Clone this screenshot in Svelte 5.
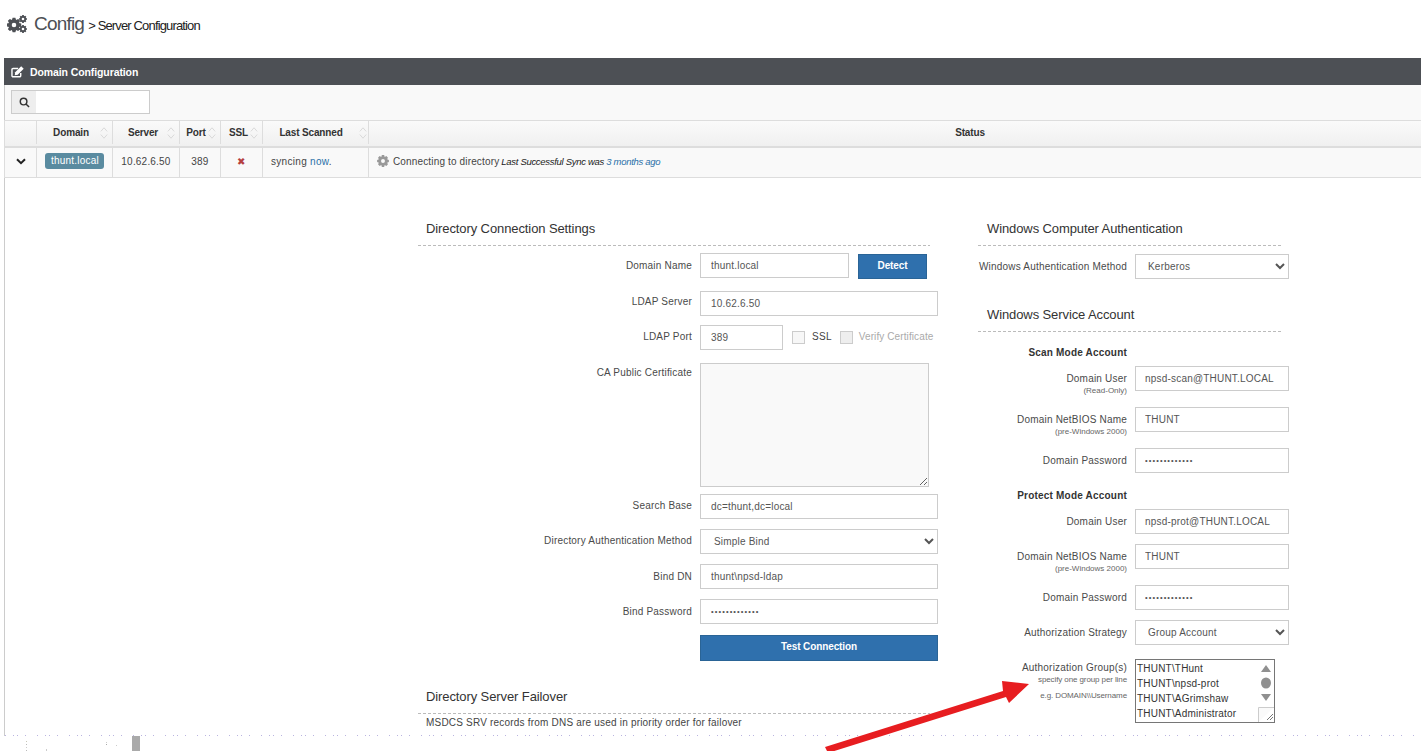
<script>
    let groups = "THUNT\\THunt\nTHUNT\\npsd-prot\nTHUNT\\AGrimshaw\nTHUNT\\Administrator"
    const sorted = [
        { label: "Domain", cls: "c-domain" },
        { label: "Server", cls: "c-server" },
        { label: "Port", cls: "c-port" },
        { label: "SSL", cls: "c-ssl" },
        { label: "Last Scanned", cls: "c-scan" }
    ]

    // teeth of a gear as one path, r1 outer and r2 root
    function gearPath(cx, cy, r1, r2, teeth = 8) {
        let d = ""
        const step = (Math.PI * 2) / teeth
        for (let i = 0; i < teeth; i++) {
            const a = i * step
            const pts = [
                [r2, a - step * 0.5],
                [r1, a - step * 0.24],
                [r1, a + step * 0.24],
                [r2, a + step * 0.5]
            ]
            for (const [r, t] of pts) {
                d += `${i === 0 && r === r2 && t < a ? "M" : "L"}${(cx + r * Math.cos(t)).toFixed(2)} ${(cy + r * Math.sin(t)).toFixed(2)}`
            }
        }
        return d + "Z"
    }
</script>

{#snippet gear(cx, cy, r1, r2, hole)}
    <path fill-rule="evenodd" d="{gearPath(cx, cy, r1, r2)}M{cx - hole} {cy}a{hole} {hole} 0 1 0 {hole * 2} 0a{hole} {hole} 0 1 0 {-hole * 2} 0Z" />
{/snippet}

{#snippet field(label, value, sub, cls = "")}
    <div class="row {cls}">
        <div class="lbl">{label}{#if sub}<small>{sub}</small>{/if}</div>
        <input class="ctl" type="text" {value} />
    </div>
{/snippet}

{#snippet password(label, cls = "")}
    <div class="row {cls}">
        <div class="lbl">{label}</div>
        <input class="ctl secret" type="password" value="aaaaaaaaaaaaa" />
    </div>
{/snippet}

{#snippet choice(label, value, cls = "")}
    <div class="row {cls}">
        <div class="lbl">{label}</div>
        <select class="ctl"><option>{value}</option></select>
    </div>
{/snippet}

<div class="page">
    <header class="crumbs">
        <svg class="cogs" viewBox="0 0 20 18" width="20" height="18" fill="#4d5055">
            {@render gear(7, 10, 7.4, 5.4, 2.3)}
            {@render gear(16, 4, 4, 2.9, 1.3)}
            {@render gear(16, 14, 4, 2.9, 1.3)}
        </svg>
        <span class="config">Config</span>
        <span class="trail">&gt; Server Configuration</span>
    </header>

    <section class="panel">
        <div class="panel-head">
            <svg viewBox="0 0 14 13" width="13" height="12" fill="none" stroke="#fff" stroke-width="1.5">
                <path d="M10.500 7.500v3a1.200 1.200 0 0 1-1.200 1.200H2.200A1.200 1.200 0 0 1 1 10.500V3.900a1.200 1.200 0 0 1 1.200-1.200h5.500" />
                <path fill="#fff" stroke="none" d="M4.500 6.800L11 .3l2.700 2.700L7.200 9.500l-3.200.5z" />
            </svg>
            <span>Domain Configuration</span>
        </div>
        <div class="toolbar">
            <div class="search">
                <span class="addon">
                    <svg viewBox="0 0 12 12" width="11" height="11" fill="none" stroke="#333" stroke-width="1.6">
                        <circle cx="5" cy="5" r="3.600" />
                        <path d="M7.600 7.600l3.400 3.400" />
                    </svg>
                </span>
            </div>
        </div>

        <div class="thead">
            <div class="cell c-toggle"></div>
            {#each sorted as col}
                <div class="cell {col.cls}">
                    <span class="th-label">{col.label}</span>
                    <svg class="sort" viewBox="0 0 10 16" width="8" height="14" fill="none" stroke="#d2d2d2" stroke-width="1">
                        <path d="M1 6l4-4.500 4 4.500M1 10l4 4.500 4-4.500" />
                    </svg>
                </div>
            {/each}
            <div class="cell c-status th-status">Status</div>
        </div>
        <div class="tbody">
            <div class="cell c-toggle">
                <svg viewBox="0 0 10 7" width="10" height="7" fill="none" stroke="#222" stroke-width="2">
                    <path d="M1 1.200l4 4 4-4" />
                </svg>
            </div>
            <div class="cell c-domain"><span class="badge">thunt.local</span></div>
            <div class="cell c-server">10.62.6.50</div>
            <div class="cell c-port">389</div>
            <div class="cell c-ssl"><span class="cross">✖</span></div>
            <div class="cell c-scan scan-text"><span>syncing <a href="#now">now</a>.</span></div>
            <div class="cell c-status status-text">
                <svg viewBox="0 0 14 14" width="12" height="12" fill="#999">
                    {@render gear(7, 7, 7, 5.200, 2.300)}
                </svg>
                <span class="state">Connecting to directory</span>
                <em>Last Successful Sync was <a href="#ago">3 months ago</a></em>
            </div>
        </div>

        <div class="forms">
            <div class="col-left">
                <h3>Directory Connection Settings</h3>
                <div class="row first-left domain-row">
                    <div class="lbl">Domain Name</div>
                    <input class="ctl short" type="text" value="thunt.local" />
                    <button class="btn detect">Detect</button>
                </div>
                {@render field("LDAP Server", "10.62.6.50", "", "ldap-row")}
                <div class="row port-row">
                    <div class="lbl">LDAP Port</div>
                    <input class="ctl port" type="text" value="389" />
                    <span class="check"></span>
                    <span class="check-label">SSL</span>
                    <span class="check off"></span>
                    <span class="check-label muted">Verify Certificate</span>
                </div>
                <div class="row cert-row">
                    <div class="lbl">CA Public Certificate</div>
                    <textarea class="ctl cert"></textarea>
                </div>
                {@render field("Search Base", "dc=thunt,dc=local", "", "nudge")}
                {@render choice("Directory Authentication Method", "Simple Bind", "nudge")}
                {@render field("Bind DN", "thunt\\npsd-ldap")}
                {@render password("Bind Password", "bind-row")}
                <div class="row test-row">
                    <div class="lbl"></div>
                    <button class="btn test">Test Connection</button>
                </div>
                <h3 class="failover">Directory Server Failover</h3>
                <p class="note">MSDCS SRV records from DNS are used in priority order for failover</p>
            </div>

            <div class="col-right">
                <h3>Windows Computer Authentication</h3>
                {@render choice("Windows Authentication Method", "Kerberos", "first-right")}
                <h3 class="service">Windows Service Account</h3>
                <div class="group-title">Scan Mode Account</div>
                {@render field("Domain User", "npsd-scan@THUNT.LOCAL", "(Read-Only)", "tall")}
                {@render field("Domain NetBIOS Name", "THUNT", "(pre-Windows 2000)", "tall")}
                {@render password("Domain Password", "tall")}
                <div class="group-title protect">Protect Mode Account</div>
                {@render field("Domain User", "npsd-prot@THUNT.LOCAL")}
                {@render field("Domain NetBIOS Name", "THUNT", "(pre-Windows 2000)", "tall")}
                {@render password("Domain Password")}
                {@render choice("Authorization Strategy", "Group Account", "strategy-row")}
                <div class="row groups-row">
                    <div class="lbl">Authorization Group(s)
                        <small class="hint">specify one group per line</small>
                        <small class="hint">e.g. DOMAIN\\Username</small>
                    </div>
                    <div class="groups-box">
                        <textarea class="groups" value={groups}></textarea>
                        <svg class="fake-scroll" viewBox="0 0 16 62" width="16" height="62">
                            <path d="M3 12L8 5l5 7z" fill="#909090" />
                            <ellipse cx="8" cy="23" rx="5" ry="5.500" fill="#909090" />
                            <path d="M3 34l5 7 5-7z" fill="#909090" />
                            <path d="M.5 62V47.500H16" fill="#fafafa" stroke="#ccc" />
                            <path d="M9 60l6-6M12 60l3-3" stroke="#777" fill="none" />
                        </svg>
                    </div>
                </div>
            </div>
        </div>
    </section>

    <div class="dots"></div>
    <div class="speck"></div>
    <div class="noise"></div>

    <svg class="arrow" viewBox="0 0 220 85" width="220" height="85">
        <path d="M5 77L183 21l-1-10 27 3-20 19-3-6L8 83z" fill="#e71d20" />
    </svg>
</div>

<style>
    :global(body) {
        margin: 0;
        background: #fff;
    }

    .page {
        position: relative;
        height: 751px;
        overflow: hidden;
        font-family: "Liberation Sans", Arial, sans-serif;
        color: #444;
    }

    .crumbs {
        display: flex;
        align-items: baseline;
        height: 58px;
        box-sizing: border-box;
        padding: 13px 0 0 7px;
    }
    .cogs {
        align-self: flex-start;
        margin-top: 2px;
    }
    .config {
        margin-left: 7px;
        font-size: 19px;
        letter-spacing: -0.8px;
        color: #4d5055;
    }
    .trail {
        margin-left: 4px;
        font-size: 13px;
        letter-spacing: -0.85px;
        color: #222;
    }

    .panel {
        margin-left: 4px;
    }
    .panel-head {
        display: flex;
        align-items: center;
        gap: 6px;
        height: 27px;
        padding-left: 7px;
        background: #4d5055;
        color: #fff;
        font-size: 10.5px;
        font-weight: bold;
        letter-spacing: -0.1px;
    }
    .toolbar {
        height: 35px;
        box-sizing: border-box;
        padding: 5px 0 0 6px;
        background: #f9f9f9;
        border-left: 1px solid #ccc;
    }
    .search {
        width: 139px;
        height: 24px;
        box-sizing: border-box;
        background: #fff;
        border: 1px solid #ccc;
    }
    .addon {
        display: flex;
        align-items: center;
        justify-content: center;
        width: 24px;
        height: 100%;
        background: #eee;
    }

    .thead, .tbody {
        display: flex;
        border-left: 1px solid #ddd;
        font-size: 10px;
    }
    .thead {
        height: 28px;
        box-sizing: border-box;
        border-top: 1px solid #ddd;
        border-bottom: 2px solid #ddd;
        background: linear-gradient(#fafafa, #f0f0f0);
        color: #333;
        font-weight: bold;
        letter-spacing: -0.15px;
        padding-bottom: 2px;
    }
    .tbody {
        height: 30px;
        box-sizing: border-box;
        border-bottom: 1px solid #ddd;
        background: #f9f9f9;
        color: #444;
        letter-spacing: 0.2px;
    }
    .tbody .cell {
        padding-bottom: 3px;
    }
    .cell {
        display: flex;
        align-items: center;
        justify-content: center;
        box-sizing: border-box;
        border-right: 1px solid #ddd;
    }
    .c-toggle { width: 32px; }
    .c-domain { width: 76px; }
    .c-server { width: 67px; }
    .c-port { width: 41px; }
    .c-ssl { width: 42px; }
    .c-scan { width: 106px; }
    .c-status { flex: 1; border-right: none; }
    .thead .c-domain { padding-left: 5px; }
    .thead .c-server { padding-left: 6px; }
    .thead .c-port { padding-left: 4px; }
    .thead .c-ssl { padding-left: 6px; }
    .thead .c-scan .sort { margin-right: 1px; }
    .th-status { padding-left: 150px; }
    .th-label {
        flex: 1;
        text-align: center;
    }
    .sort {
        flex: none;
        margin-right: 4px;
    }
    .badge {
        padding: 2px 5px 3px 6px;
        border-radius: 3px;
        background: #5a8ba0;
        color: #fff;
        letter-spacing: 0.2px;
    }
    .cross {
        color: #b5403f;
        font-size: 10px;
    }
    .tbody .scan-text {
        justify-content: flex-start;
        padding-left: 8px;
        letter-spacing: 0.3px;
    }
    a {
        color: #2a70a8;
        text-decoration: none;
    }
    .tbody .status-text {
        justify-content: flex-start;
        gap: 4px;
        padding-left: 8px;
    }
    .state {
        letter-spacing: 0.15px;
    }
    .status-text em {
        color: #222;
        font-size: 9.5px;
        letter-spacing: -0.3px;
        margin-left: -2px;
    }

    .forms {
        display: flex;
        height: 558px;
        box-sizing: border-box;
        padding: 41px 0 0 413px;
        border-left: 1px solid #ccc;
    }
    .col-left {
        width: 512px;
        flex: none;
    }
    .col-right {
        width: 312px;
        flex: none;
        margin-left: 48px;
    }
    h3 {
        margin: 0;
        height: 27px;
        padding: 1px 0 0 8px;
        box-sizing: border-box;
        font-size: 13px;
        font-weight: normal;
        letter-spacing: -0.1px;
        line-height: 17px;
        color: #333;
        background: repeating-linear-gradient(90deg, #bbb 0 3px, transparent 3px 5px) bottom / 100% 1px no-repeat;
    }
    .col-right h3 {
        width: 303px;
        padding-left: 9px;
    }

    .row {
        display: flex;
        align-items: flex-start;
        height: 25px;
        margin-bottom: 10px;
    }
    .first-left { margin-top: 7px; }
    .first-right { margin-top: 8px; }
    .domain-row { margin-bottom: 13px; }
    .ldap-row { margin-bottom: 9px; }
    .port-row { margin-bottom: 13px; }
    .cert-row { height: 124px; margin-bottom: 7px; }
    .bind-row { margin-bottom: 11px; }
    .test-row { height: 26px; }
    .tall { margin-bottom: 16px; }
    .strategy-row { margin-bottom: 14px; }
    .groups-row { height: 64px; }

    .lbl {
        width: 274px;
        flex: none;
        margin-right: 8px;
        padding-top: 7px;
        text-align: right;
        white-space: nowrap;
        font-size: 10px;
        letter-spacing: 0.2px;
        color: #4a4a4a;
    }
    .col-right .lbl {
        width: 149px;
    }
    .ldap-row .lbl { padding-top: 5px; }
    .port-row .lbl, .nudge .lbl { padding-top: 6px; }
    .cert-row .lbl { padding-top: 4px; }
    .groups-row .lbl {
        padding-top: 3px;
    }
    .lbl small {
        display: block;
        margin-top: 2px;
        font-size: 8px;
        letter-spacing: 0;
        color: #666;
    }
    .lbl .hint {
        margin-top: 2px;
        margin-bottom: 7px;
        letter-spacing: -0.1px;
    }

    .ctl {
        flex: none;
        width: 238px;
        height: 25px;
        box-sizing: border-box;
        padding: 1px 10px;
        background: #fff;
        border: 1px solid #ccc;
        border-radius: 0;
        font: 10px "Liberation Sans", Arial, sans-serif;
        letter-spacing: 0.2px;
        color: #555;
        outline: none;
    }
    .secret {
        font-size: 7.500px;
        letter-spacing: 1.1px;
    }
    .col-right .ctl {
        width: 154px;
        padding: 1px 9px;
    }
    select.ctl {
        padding: 1px 9px;
    }
    .col-right select.ctl {
        padding: 1px 8px;
    }
    .short {
        width: 149px;
    }
    .port {
        width: 83px;
    }
    .cert {
        width: 229px;
        height: 124px;
        background: #f9f9f9;
    }
    .check {
        flex: none;
        width: 13px;
        height: 13px;
        box-sizing: border-box;
        margin: 6px 7px 0 9px;
        background: #f7f7f7;
        border: 1px solid #ccc;
    }
    .check.off {
        background: #eee;
        margin-left: 8px;
        margin-right: 6px;
    }
    .check-label {
        flex: none;
        padding-top: 6px;
        font-size: 10px;
        letter-spacing: 0.3px;
    }
    .muted {
        color: #aaa;
        letter-spacing: 0.1px;
    }

    .btn {
        flex: none;
        box-sizing: border-box;
        height: 26px;
        padding: 0 0 3px;
        background: #2f70ad;
        border: 1px solid #2a6496;
        color: #fff;
        font: bold 10px "Liberation Sans", Arial, sans-serif;
        letter-spacing: -0.1px;
    }
    .detect {
        width: 69px;
        height: 25px;
        margin-left: 9px;
        margin-top: 1px;
    }
    .test {
        width: 238px;
    }

    .failover {
        margin-top: 26px;
    }
    .note {
        margin: 3px 0 0 8px;
        font-size: 10px;
        letter-spacing: 0.2px;
        color: #444;
    }

    .service {
        margin-top: 26px;
    }
    .group-title {
        margin: 15px 0 8px;
        padding-right: 163px;
        text-align: right;
        font-size: 10px;
        font-weight: bold;
        letter-spacing: 0.2px;
        color: #333;
    }
    .protect {
        margin-top: 17px;
    }
    .groups-box {
        position: relative;
        flex: none;
        width: 140px;
        height: 64px;
    }
    .groups {
        display: block;
        width: 100%;
        height: 100%;
        box-sizing: border-box;
        padding: 1px;
        border: 1px solid #767676;
        border-radius: 0;
        resize: none;
        overflow: hidden;
        font: 10px/15px "Liberation Sans", Arial, sans-serif;
        letter-spacing: 0.2px;
        color: #333;
        outline: none;
    }
    .fake-scroll {
        position: absolute;
        right: 1px;
        top: 1px;
    }

    .dots {
        position: absolute;
        left: 5px;
        right: 0;
        top: 735px;
        height: 1px;
        background: repeating-linear-gradient(90deg, #b9b4e0 0 1px, transparent 1px 8px, #b9b4e0 8px 9px, transparent 9px 12px, #b9b4e0 12px 13px, transparent 13px 20px, #b9b4e0 20px 21px, transparent 21px 32px);
    }
    .speck {
        position: absolute;
        left: 132px;
        top: 736px;
        width: 8px;
        height: 15px;
        background: #aaa;
    }
    .noise {
        position: absolute;
        left: 26px;
        top: 741px;
        width: 1px;
        height: 1px;
        background: #c8c8b8;
        box-shadow: 0 3px #bbb, 0 6px #ccc, 0 9px #bbb, 20px 8px #ccc, 20px 9px #ccc, 80px 1px #ccc, 80px 3px #aaa, 90px 4px #ccc;
    }
    .arrow {
        position: absolute;
        left: 820px;
        top: 670px;
    }
</style>
